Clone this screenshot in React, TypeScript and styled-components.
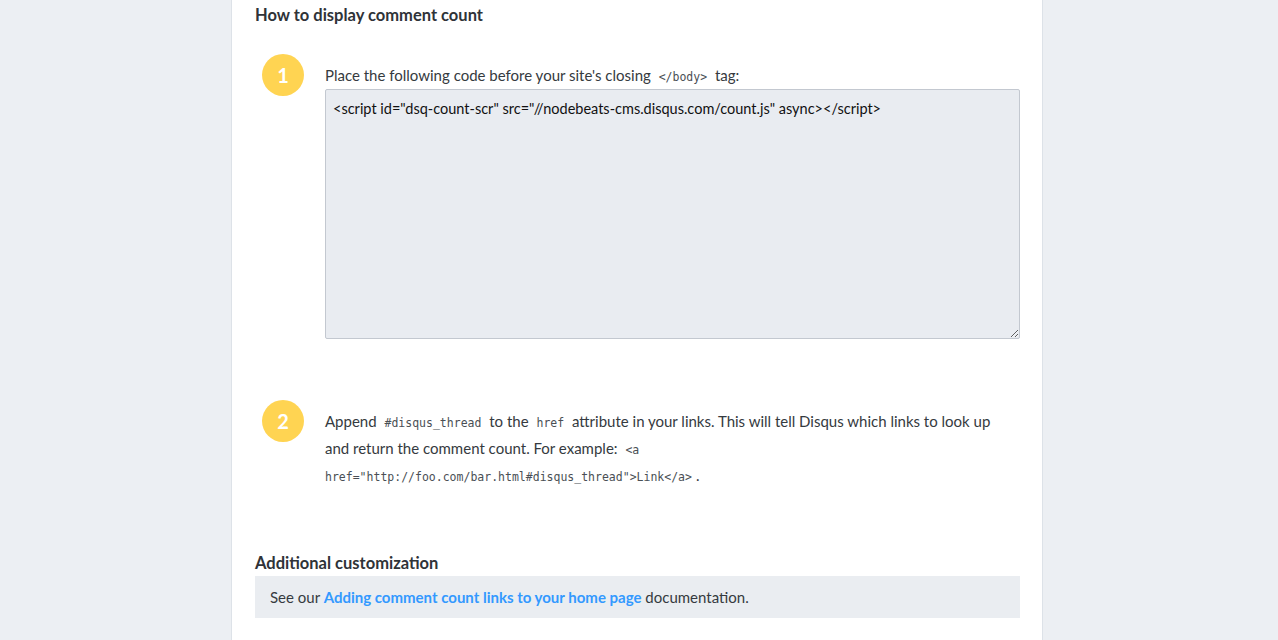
import React from "react";
import styled, { createGlobalStyle } from "styled-components";

const Global = createGlobalStyle`
  html, body { margin: 0; padding: 0; background: #eceff3; }
  body { font-family: Lato, "Noto Sans", sans-serif; color: #353a40; }
`;

const Page = styled.div`
  display: flex;
  justify-content: center;
  padding-right: 4px;
  min-height: 640px;
`;

const Card = styled.div`
  width: 812px;
  box-sizing: border-box;
  background: #fff;
  border-left: 1px solid #dde2e8;
  border-right: 1px solid #dde2e8;
  padding: 4px 22px 22px 23px;
  min-height: 640px;
`;

const Heading = styled.h3`
  margin: 0;
  font-size: 16.5px;
  font-weight: 700;
  line-height: 22px;
  color: #2f3338;
`;

const Steps = styled.div`
  display: flex;
  flex-direction: column;
  gap: 61px;
  margin-top: 28px;
`;

const Step = styled.div`
  display: grid;
  grid-template-columns: 42px 1fr;
  column-gap: 21px;
  padding-left: 7px;
  align-items: start;
`;

const Badge = styled.div`
  width: 42px;
  height: 42px;
  border-radius: 50%;
  background: #ffd452;
  color: #fff;
  font-weight: 700;
  font-size: 20px;
  display: flex;
  align-items: center;
  justify-content: center;
`;

const Body = styled.div`
  padding-top: 8px;
  font-size: 15px;
  line-height: 27px;
  color: #353a40;
`;

const Code = styled.code`
  font-family: "DejaVu Sans Mono", "Liberation Mono", monospace;
  font-size: 11.5px;
  line-height: 1;
  color: #4a4f55;
  padding: 0 4px;
`;

const Snippet = styled.textarea`
  display: block;
  width: 100%;
  height: 250px;
  box-sizing: border-box;
  margin-top: 0;
  background: #e9ecf1;
  border: 1px solid #c3c8d0;
  border-radius: 2px;
  padding: 9px 7px 6px;
  font-family: Lato, "Noto Sans", sans-serif;
  font-size: 14.5px;
  line-height: 20px;
  color: #111;
  outline: none;
  resize: vertical;
`;

const SubHeading = styled(Heading)`
  margin-top: 63px;
  margin-bottom: 2px;
`;

const Note = styled.div`
  background: #eaedf1;
  padding: 10px 15px;
  font-size: 15px;
  line-height: 22px;
  color: #353a40;
`;

const Link = styled.a`
  color: #3399ff;
  font-weight: 700;
  text-decoration: none;
`;

export default function App() {
  return (
    <>
      <Global />
      <Page>
        <Card>
          <Heading>How to display comment count</Heading>
          <Steps>
            <Step>
              <Badge>1</Badge>
              <Body>
                Place the following code before your site's closing <Code>&lt;/body&gt;</Code> tag:
                <Snippet
                  readOnly
                  value={'<script id="dsq-count-scr" src="//nodebeats-cms.disqus.com/count.js" async></script>'}
                />
              </Body>
            </Step>
            <Step>
              <Badge>2</Badge>
              <Body>
                Append <Code>#disqus_thread</Code> to the <Code>href</Code> attribute in your links. This will tell
                Disqus which links to look up
                <br />
                and return the comment count. For example:{" "}
                <Code>&lt;a href="http://foo.com/bar.html#disqus_thread"&gt;Link&lt;/a&gt;</Code>.
              </Body>
            </Step>
          </Steps>
          <SubHeading>Additional customization</SubHeading>
          <Note>
            See our <Link href="#">Adding comment count links to your home page</Link> documentation.
          </Note>
        </Card>
      </Page>
    </>
  );
}
